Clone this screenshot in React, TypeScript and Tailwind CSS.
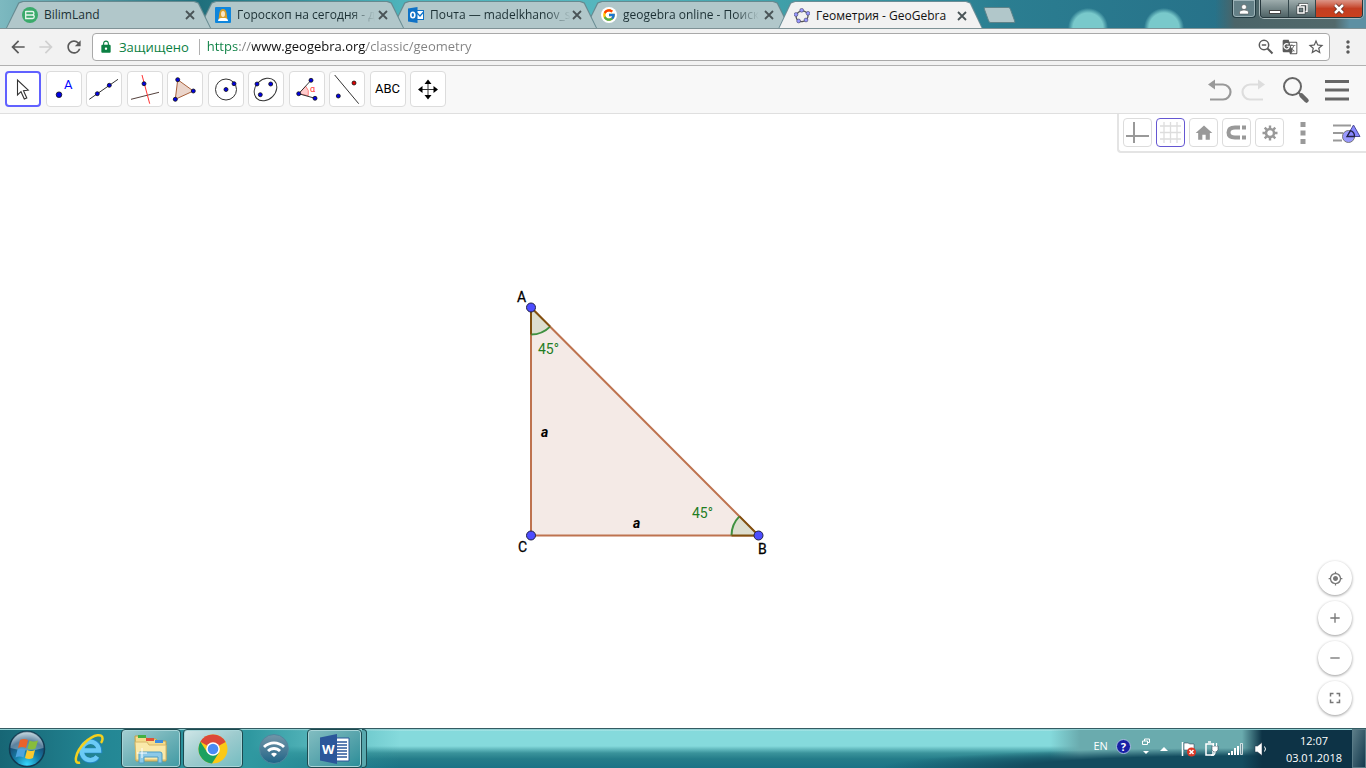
import { ReactNode } from 'react';
import clsx from 'clsx';
import {
  MdAdd,
  MdArrowBack,
  MdArrowForward,
  MdFullscreen,
  MdGTranslate,
  MdGpsFixed,
  MdHome,
  MdLock,
  MdMoreVert,
  MdRefresh,
  MdRemove,
  MdStarBorder,
  MdWifi,
} from 'react-icons/md';
import { FcGoogle } from 'react-icons/fc';

interface TabProps {
  title: string;
  icon: ReactNode;
  active?: boolean;
  layer: string;
}

interface ToolProps {
  label: string;
  selected?: boolean;
  children: ReactNode;
}

const BilimIcon = () => (
  <svg className="h-4 w-4 shrink-0" viewBox="0 0 16 16">
    <circle cx="8" cy="8" r="8" fill="#3aaa6b" />
    <path d="M3.700 4.500h6.500a1.750 1.750 0 0 1 0 3.500H3.700M10.500 8a1.750 1.750 0 0 1 0 3.500H3.700V8" fill="none" stroke="#e8f6ee" strokeWidth="1.300" />
    <path d="M3.700 4v4" stroke="#e8f6ee" strokeWidth="1.300" />
  </svg>
);

const HoroscopeIcon = () => (
  <svg className="h-4 w-4 shrink-0" viewBox="0 0 16 16">
    <rect width="16" height="16" rx="1" fill="#0f86dc" />
    <path d="M3.500 12C4.500 9 3.500 2 8 2s3.500 7 4.500 10z" fill="#d9a02c" />
    <ellipse cx="8" cy="7" rx="2" ry="3" fill="#fbe6c4" />
    <path d="M3 14c0-2.500 2-3 5-3s5 .5 5 3z" fill="#fff" />
  </svg>
);

const OutlookIcon = () => (
  <svg className="h-4 w-4 shrink-0" viewBox="0 0 16 16">
    <rect x="8" y="3.500" width="7.500" height="9" fill="#fff" stroke="#0f72c6" />
    <path d="M9 6l3 3 3.500-4" fill="none" stroke="#0f72c6" strokeWidth="1.200" />
    <path d="M0 1.500L9.500 0v16L0 14.500z" fill="#0f72c6" />
    <ellipse cx="4.800" cy="8" rx="2" ry="2.700" fill="none" stroke="#fff" strokeWidth="1.600" />
  </svg>
);

const GeoGebraIcon = () => (
  <svg className="h-4 w-4 shrink-0" viewBox="0 0 16 16">
    <ellipse cx="8" cy="8.300" rx="6" ry="5.300" fill="none" stroke="#555" strokeWidth="1.300" transform="rotate(-12 8 8)" />
    <g fill="#9999ff" stroke="#44446a" strokeWidth=".6">
      <circle cx="7.700" cy="2.300" r="1.900" />
      <circle cx="14" cy="5.300" r="1.900" />
      <circle cx="12" cy="12" r="1.900" />
      <circle cx="4.600" cy="13" r="1.900" />
      <circle cx="2" cy="6.500" r="1.900" />
    </g>
  </svg>
);

const Tab = ({ title, icon, active, layer }: TabProps) => (
  <div
    className={clsx(
      '-mr-3 w-[205px] shrink-0 px-px pt-px [clip-path:polygon(0_100%,6%_6%,8%_0,92%_0,94%_6%,100%_100%)]',
      active ? '-mb-px h-7 bg-[#6b8d96]' : 'h-[27px] bg-[#668a90]',
      layer,
    )}
  >
    <div
      className={clsx(
        'flex h-full items-center pl-[15px] pr-[14px] [clip-path:polygon(0_100%,6%_6%,8%_0,92%_0,94%_6%,100%_100%)]',
        active ? 'bg-[#f2f2f2]' : 'bg-[#b1c7ca]',
      )}
    >
      {icon}
      <button
        className={clsx(
          'ml-1.5 shrink-0 whitespace-nowrap text-left text-xs',
          active ? 'text-[#111111]' : 'text-[#1c3034]',
          !active && title.length > 12 && '[mask-image:linear-gradient(to_right,black_82%,transparent)]',
        )}
      >
        {title}
      </button>
      <button aria-label="Close tab" className="ml-auto">
        <svg width="12" height="12" viewBox="0 0 12 12">
          <path d="M2 2l8 8M10 2l-8 8" stroke="#4a5457" strokeWidth="1.800" />
        </svg>
      </button>
    </div>
  </div>
);

const WindowButtons = () => (
  <div className="ml-auto flex gap-1 self-start pr-[3px]">
    <button
      aria-label="Profile"
      className="grid h-[18px] w-6 place-items-center rounded-b border border-t-0 border-[#223b42] bg-[#648087] shadow-[inset_0_0_0_1px_#9db3b8]"
    >
      <svg width="10" height="12" viewBox="0 0 10 12" fill="#fff" stroke="#444" strokeWidth=".5">
        <circle cx="5" cy="4" r="2.500" />
        <path d="M.5 11V9Q1 7 5 7t4.500 2v2z" />
      </svg>
    </button>
    <div className="flex h-[18px] overflow-hidden rounded-b border border-t-0 border-[#26373c] shadow-[0_0_0_1px_#a9b8ba]">
      <button aria-label="Minimize" className="grid w-7 place-items-center border-r border-[#33464b] bg-linear-to-b from-[#9eadad] to-[#4f6366]">
        <svg width="12" height="12" viewBox="0 0 12 12">
          <rect x=".5" y="7.500" width="11" height="3" fill="#fff" stroke="#444" />
        </svg>
      </button>
      <button aria-label="Restore" className="grid w-[27px] place-items-center border-r border-[#33464b] bg-linear-to-b from-[#9eadad] to-[#4f6366]">
        <svg width="12" height="12" viewBox="0 0 12 12" fill="none">
          <path d="M4 3V1.500h7v7H9.500M2 4h6v6H2z" stroke="#3c4446" strokeWidth="3" />
          <path d="M4 3V1.500h7v7H9.500M2 4h6v6H2z" stroke="#fff" strokeWidth="1.500" />
        </svg>
      </button>
      <button aria-label="Close" className="grid w-[46px] place-items-center bg-linear-to-b from-[#dc9587] via-[#c33e22] to-[#c9401d]">
        <svg width="12" height="12" viewBox="0 0 12 12">
          <path d="M2 2l8 8M10 2l-8 8" stroke="#5a2a24" strokeWidth="4" />
          <path d="M2 2l8 8M10 2l-8 8" stroke="#fff" strokeWidth="2.500" />
        </svg>
      </button>
    </div>
  </div>
);

const TabStrip = () => (
  <header className="flex h-[29px] items-end overflow-hidden border-b border-[#7f9296] bg-[radial-gradient(ellipse_at_1081px_34px,#2b7e91_9px,transparent_14px),radial-gradient(circle_at_1088px_28px,#79c9cb_15px,transparent_20px),radial-gradient(ellipse_at_1157px_34px,#2b7e91_9px,transparent_14px),radial-gradient(circle_at_1164px_28px,#79c9cb_15px,transparent_20px),linear-gradient(to_right,transparent_1215px,#4b6468_1235px,#52696b_1335px,#5d90a3_1350px),linear-gradient(to_right,#7db9c0,#1f6f7c_200px,#4db3bb_400px,#55b6be_600px,#3f9ea8_790px,#2b7e91_1000px,#246a84)] pl-1.5">
    <Tab layer="z-40" title="BilimLand" icon={<BilimIcon />} />
    <Tab layer="z-30" title="Гороскоп на сегодня - д" icon={<HoroscopeIcon />} />
    <Tab layer="z-20" title="Почта — madelkhanov_s" icon={<OutlookIcon />} />
    <Tab
      layer="z-10"
      title="geogebra online - Поиск"
      icon={<span className="shrink-0 rounded-full bg-white p-px"><FcGoogle size={14} /></span>}
    />
    <Tab active layer="z-50" title="Геометрия - GeoGebra" icon={<GeoGebraIcon />} />
    <button
      aria-label="New tab"
      className="mb-[5px] ml-[15px] h-4 w-[27px] skew-x-20 rounded-xs border border-[#5d838a] bg-[#b1c7ca]"
    />
    <WindowButtons />
  </header>
);

const AddressBar = () => (
  <div className="flex h-[37px] items-center border-b border-[#b1b1b1] bg-[#f2f2f2] px-2 text-[#5a5a5a]">
    <button aria-label="Back" className="w-7">
      <MdArrowBack size={20} />
    </button>
    <button aria-label="Forward" className="w-7 text-[#d0d0d0]">
      <MdArrowForward size={20} />
    </button>
    <button aria-label="Reload" className="w-7">
      <MdRefresh size={20} />
    </button>
    <div className="flex h-7 flex-1 items-center rounded-sm border border-[#a9a9a9] bg-white pl-1.5 pr-1">
      <MdLock size={14} className="text-[#0b8043]" />
      <label htmlFor="url" className="ml-1.5 border-r border-[#b0b0b0] pr-2.5 text-[13px] leading-4 text-[#0b8043]">
        Защищено
      </label>
      <input
        id="url"
        readOnly
        value="https://www.geogebra.org/classic/geometry"
        className="ml-[7px] min-w-0 flex-1 bg-[linear-gradient(to_right,#0b8043_31px,#808080_31px,#808080_45px,#111111_45px,#111111_159px,#808080_159px)] bg-clip-text text-[13px] text-transparent outline-none"
      />
      <button aria-label="Zoom" className="w-[25px]">
        <svg width="18" height="18" viewBox="0 0 18 18" fill="none" stroke="currentColor" strokeWidth="1.500">
          <circle cx="7" cy="7" r="4.700" />
          <path d="M10.500 10.500l5 5" strokeWidth="2" />
          <path d="M4.800 7h4.400" />
        </svg>
      </button>
      <button aria-label="Translate" className="w-[25px]">
        <MdGTranslate size={16} />
      </button>
      <button aria-label="Bookmark" className="w-[18px]">
        <MdStarBorder size={18} />
      </button>
    </div>
    <button aria-label="Chrome menu" className="ml-2 w-5">
      <MdMoreVert size={20} />
    </button>
  </div>
);

const Tool = ({ label, selected, children }: ToolProps) => (
  <button
    aria-label={label}
    className={clsx(
      'grid h-9 w-9 place-items-center rounded bg-white',
      selected ? 'border-2 border-[#6161ff]' : 'border border-[#dcdcdc]',
    )}
  >
    <svg className="h-8 w-8" viewBox="2 2 32 32" fill="none" stroke="#333">
      {children}
    </svg>
  </button>
);

const Dot = ({ x, y, r = 2, fill = '#0000e6' }: { x: number; y: number; r?: number; fill?: string }) => (
  <circle cx={x} cy={y} r={r} fill={fill} stroke="#111" strokeWidth=".8" />
);

const Toolbar = () => (
  <nav className="flex h-12 items-center border-b border-[#dfdfdf] bg-[#f8f8f8] pl-[5px] pr-4">
    <div className="flex w-[441px] justify-between pb-0.5">
      <Tool label="Move" selected>
        <path d="M12.500 9v15l3.500-3.300 3.300 7.300 2.500-1.100-3.300-7.200 4.700-.5z" strokeWidth="1.100" />
      </Tool>
      <Tool label="Point">
        <Dot x={13} y={23.700} r={2.800} />
        <text x="18" y="18" fontSize="13" fontFamily="Roboto, sans-serif" fill="#0000ff" stroke="none">
          A
        </text>
      </Tool>
      <Tool label="Line">
        <path d="M3.300 28.300L32 8.300" />
        <Dot x={11.300} y={22.700} />
        <Dot x={23.300} y={14.300} />
      </Tool>
      <Tool label="Perpendicular line">
        <path d="M4 28.300l28-7" stroke="#54403c" />
        <path d="M15 4l7.700 28.700" stroke="#f33" />
        <Dot x={17} y={12.700} />
      </Tool>
      <Tool label="Polygon">
        <path d="M10.700 8.700L26.300 20 8.300 28.300z" fill="#ebd5cb" stroke="#a8603a" />
        <Dot x={10.700} y={8.700} />
        <Dot x={26.300} y={20} />
        <Dot x={8.300} y={28.300} />
      </Tool>
      <Tool label="Circle with center">
        <circle cx="18" cy="18.500" r="10.500" />
        <Dot x={18} y={18.500} />
        <Dot x={26} y={12.700} />
      </Tool>
      <Tool label="Ellipse">
        <ellipse cx="17.500" cy="18.500" rx="12.500" ry="10" transform="rotate(-45 17.500 18.500)" />
        <Dot x={9} y={13} />
        <Dot x={22.700} y={13} />
        <Dot x={12.300} y={23.700} />
      </Tool>
      <Tool label="Angle">
        <path d="M9.700 22.700l7-7.500a10 10 0 0 1 2.500 9.500z" fill="#fcc" stroke="#f55" strokeWidth=".7" />
        <path d="M22 9.300L9.700 22.700 26 27.300" />
        <Dot x={22} y={9.300} />
        <Dot x={9.700} y={22.700} />
        <Dot x={26} y={27.300} />
        <text x="21" y="21" fontSize="9" fontFamily="Roboto, sans-serif" fill="#f33" stroke="none">
          α
        </text>
      </Tool>
      <Tool label="Reflect about line">
        <path d="M5.700 4l24 28.700" />
        <Dot x={9.300} y={25} />
        <Dot x={25} y={12} fill="#e00000" />
      </Tool>
      <button className="h-9 w-9 rounded border border-[#dcdcdc] bg-white font-[Roboto,sans-serif] text-[13px] font-normal text-black">
        ABC
      </button>
      <Tool label="Move graphics view">
        <path d="M18 10v17M10 18.500h17" stroke="#333" />
        <path d="M18 8.500l3.500 4.500h-7zM18 28.500l3.500-4.500h-7zM8 18.500l4.500-3.500v7zM28 18.500l-4.500-3.500v7z" fill="#000" stroke="none" />
      </Tool>
    </div>
    <div className="ml-auto flex items-center text-[#666666]">
      <button aria-label="Undo">
        <svg width="26" height="26" viewBox="0 0 26 26" fill="none">
          <path d="M7 7.500h9a7 7 0 0 1 0 15H3" stroke="#999" strokeWidth="2.200" />
          <path d="M1 7.500L8 2.500v10z" fill="#999" />
        </svg>
      </button>
      <button aria-label="Redo" className="ml-[7px]">
        <svg width="26" height="26" viewBox="0 0 26 26" fill="none">
          <path d="M19 7.500h-9a7 7 0 0 0 0 15h13" stroke="#ddd" strokeWidth="2.200" />
          <path d="M25 7.500l-7-5v10z" fill="#ddd" />
        </svg>
      </button>
      <button aria-label="Search" className="ml-4">
        <svg width="28" height="28" viewBox="0 0 28 28" fill="none" stroke="#666">
          <circle cx="10.500" cy="10.500" r="8.500" strokeWidth="2" />
          <path d="M16.500 16.500l3 3" strokeWidth="2" />
          <path d="M19.500 19.500l5 5" strokeWidth="4.500" strokeLinecap="round" />
        </svg>
      </button>
      <button aria-label="Menu" className="ml-3.5">
        <svg width="26" height="26" viewBox="0 0 26 26" stroke="#666" strokeWidth="3">
          <path d="M1 4.500h24M1 13h24M1 22h24" />
        </svg>
      </button>
    </div>
  </nav>
);

const StyleButton = ({ label, selected, children }: ToolProps) => (
  <button
    aria-label={label}
    className={clsx(
      'grid h-[29px] w-[29px] place-items-center rounded border bg-white text-[#999999]',
      selected ? 'border-[#6557d2]' : 'border-[#dcdcdc]',
    )}
  >
    {children}
  </button>
);

const StyleBar = () => (
  <div className="absolute right-0 top-0 flex h-[39px] items-center gap-1 rounded-bl border-b-2 border-l-2 border-[#e4e4e4] bg-white pl-1 pr-[5px]">
    <StyleButton label="Axes">
      <svg width="23" height="23" viewBox="0 0 23 23" stroke="#999" strokeWidth="2">
        <path d="M8 1v21M0 15h23" />
      </svg>
    </StyleButton>
    <StyleButton label="Grid" selected>
      <svg width="23" height="23" viewBox="0 0 23 23" stroke="#ddd" strokeWidth="1.300">
        <path d="M5 1v21M11.500 1v21M18 1v21M1 5h21M1 11.500h21M1 18h21" />
      </svg>
    </StyleButton>
    <StyleButton label="Standard view">
      <MdHome size={20} />
    </StyleButton>
    <StyleButton label="Point capturing">
      <svg width="21" height="15" viewBox="0 0 21 15" fill="none" stroke="#999" strokeWidth="4">
        <path d="M14 2.500H9Q2.500 2.500 2.500 7.500T9 12.500h5M16 2.500h4M16 12.500h4" />
      </svg>
    </StyleButton>
    <StyleButton label="Settings">
      <svg width="16" height="16" viewBox="0 0 16 16" fill="none" stroke="#999">
        <circle cx="8" cy="8" r="4" strokeWidth="2.500" />
        <path d="M8 .5v3M8 12.500v3M.5 8h3M12.500 8h3M2.700 2.700l2 2M11.300 11.300l2 2M2.700 13.300l2-2M11.300 4.700l2-2" strokeWidth="2.400" />
      </svg>
    </StyleButton>
    <button aria-label="More" className="grid h-7 w-[29px] place-items-center">
      <svg width="6" height="22" viewBox="0 0 6 22" fill="#999">
        <path d="M.5 0h5v5h-5zM.5 8.500h5v5h-5zM.5 17h5v5h-5z" />
      </svg>
    </button>
    <button aria-label="Toggle style bar" className="ml-3">
      <svg width="28" height="22" viewBox="0 0 28 22">
        <path d="M0 3.500h18M0 11h10M0 18.500h9" stroke="#999" strokeWidth="2.200" />
        <circle cx="15.500" cy="14.500" r="6" fill="#99f" stroke="#777" />
        <path d="M20.500 3l6.500 11.500H14z" fill="#88f" stroke="#4a4a99" />
        <path d="M17.500 8.600a6 6 0 0 1 4 5.900H14z" fill="none" stroke="#224" strokeWidth="1.300" />
      </svg>
    </button>
  </div>
);

const Triangle = () => (
  <svg
    className="absolute left-[500px] top-[166px] font-[Roboto,sans-serif] text-sm"
    width="280"
    height="290"
    viewBox="0 0 280 290"
    fill="none"
  >
    <path d="M31 27.500V255.500H258.500z" fill="#f4eae6" stroke="#be734f" strokeWidth="2" />
    <path d="M31 27.500V54.500A27 27 0 0 0 50.100 46.600z" fill="#dddecf" />
    <path d="M31 54.500A27 27 0 0 0 50.100 46.600" stroke="#3f9140" strokeWidth="2" />
    <path d="M31 54.500V27.500l19.100 19.100" stroke="#80500f" strokeWidth="2" />
    <path d="M258.500 255.500h-27a27 27 0 0 1 7.900-19.100z" fill="#dddecf" />
    <path d="M231.500 255.500a27 27 0 0 1 7.900-19.100" stroke="#3f9140" strokeWidth="2" />
    <path d="M231.500 255.500h27l-19.100-19.100" stroke="#80500f" strokeWidth="2" />
    <g fill="#4d4dff" stroke="#222244">
      <circle cx="31" cy="27.500" r="4.500" />
      <circle cx="31" cy="255.500" r="4.500" />
      <circle cx="258.500" cy="255.500" r="4.500" />
    </g>
    <g fill="#000" stroke="#000" strokeWidth=".3">
      <text x="17" y="22">A</text>
      <text x="18" y="272">C</text>
      <text x="258" y="274">B</text>
    </g>
    <g fill="#1f7d1f">
      <text x="38" y="74">45°</text>
      <text x="192" y="238">45°</text>
    </g>
    <g fill="#000" className="font-bold italic">
      <text x="41" y="157">a</text>
      <text x="133" y="248">a</text>
    </g>
  </svg>
);

const zoomButtons = [
  { label: 'Standard view', icon: <MdGpsFixed size={15} /> },
  { label: 'Zoom in', icon: <MdAdd size={16} /> },
  { label: 'Zoom out', icon: <MdRemove size={16} /> },
  { label: 'Fullscreen', icon: <MdFullscreen size={18} /> },
];

const StartOrb = () => (
  <svg width="38" height="38" viewBox="0 0 38 38">
    <defs>
      <radialGradient id="orb" cx=".5" cy=".95" r=".9">
        <stop offset="0" stopColor="#35d8ff" />
        <stop offset=".4" stopColor="#167fa8" />
        <stop offset=".75" stopColor="#174b74" />
        <stop offset="1" stopColor="#9cb9c8" />
      </radialGradient>
    </defs>
    <circle cx="19" cy="19" r="17.500" fill="url(#orb)" stroke="#123b52" strokeWidth="1.500" />
    <path d="M2.500 18a16.500 16.500 0 0 1 33 0q-16 5-33 0z" fill="#fff" opacity=".3" />
    <path d="M12 10q4-2 8 0l-2 8q-4-2-8 0z" fill="#e9622a" />
    <path d="M21.500 10.500q4 2 8.500 0l-2.500 8q-4 2-8 0z" fill="#87bd3c" />
    <path d="M9.500 19.500q4-2 8 0l-2 8q-4-2-8 0z" fill="#4da4df" />
    <path d="M19 20q4 2 8 0l-2 8q-4 2-8 0z" fill="#fbc92f" />
  </svg>
);

const ExplorerLogo = () => (
  <svg width="30" height="32" viewBox="0 0 30 32" fill="none">
    <path d="M8 17.500h17.500A9 9.500 0 1 0 23.500 24" stroke="#2387c4" strokeWidth="5.500" />
    <path d="M8 17.500h17A8.700 9.200 0 1 0 23.300 23.500" stroke="#6bcbf6" strokeWidth="4.300" />
    <path d="M6 29.500C-1 32 1 19 11 9.500 20 1 29 0 28.500 6q0 2-1.500 4" stroke="#f4d01e" strokeWidth="2.500" />
  </svg>
);

const FolderIcon = () => (
  <svg width="34" height="30" viewBox="0 0 34 30">
    <path d="M1 2h10l2 3h9l2 2h8v20H2z" fill="#f5dc8c" stroke="#c2a04a" />
    <path d="M4 1h8v3H4z" fill="#42b142" />
    <path d="M12 4h8v3h-8z" fill="#e05138" />
    <path d="M21 6h8v3h-8z" fill="#3d8de0" />
    <path d="M1 8h12l2 3h17v15H2z" fill="#fae9aa" stroke="#d6b868" />
    <path d="M5 29V19q0-1 1-1h20q2 0 2 2v9h-4v-6H10v6z" fill="#8cc9e7" stroke="#4d9cc3" />
    <path d="M8 14v10M3 19h10" stroke="#fff" />
  </svg>
);

const ChromeIcon = () => (
  <svg width="30" height="30" viewBox="0 0 30 30">
    <circle cx="15" cy="15" r="14.500" fill="#fbc916" />
    <path d="M15 15L2.400 7.800A14.500 14.500 0 0 1 27.600 8z" fill="#dc4838" />
    <path d="M2.400 7.800A14.500 14.500 0 0 0 14 29.500l7-11L9 18z" fill="#1ba160" />
    <circle cx="15" cy="15" r="6.800" fill="#fff" />
    <circle cx="15" cy="15" r="5.300" fill="#4a8bf4" />
  </svg>
);

const WordIcon = () => (
  <svg width="32" height="30" viewBox="0 0 32 30">
    <path d="M15 4h15v23H15z" fill="#fff" stroke="#2b579a" />
    <path d="M18 8h10M18 11h10M18 14h10M18 17h10M18 20h10M18 23h10" stroke="#2b579a" strokeWidth="1.500" />
    <path d="M1 3.500L18 0v30L1 26.500z" fill="#2b579a" />
    <text x="3" y="20" fontSize="13" fontWeight="700" fontFamily="Open Sans, sans-serif" fill="#fff">
      W
    </text>
  </svg>
);

const taskButton = 'grid h-[39px] place-items-center rounded-sm border border-[#1c4a50] shadow-[inset_0_0_0_1px_#a8d5d8]';

const Taskbar = () => (
  <footer className="flex h-10 items-center border-t border-[#345c63] bg-[linear-gradient(to_right,transparent_1242px,#0d3346_1262px),linear-gradient(to_right,#176675,#238694_100px,#2f98a0_250px,transparent_400px),radial-gradient(ellipse_360px_20px_at_1240px_100%,#134c5f_60%,transparent),linear-gradient(to_right,transparent_1050px,#6aabae_1080px),linear-gradient(to_bottom,#b4e9e9_1px,#85dadc_2px,#85dadc_17px,#3a939b_24px,#247c89_30px,#1a7386)] font-['Open_Sans',sans-serif] text-[11px] text-white shadow-[inset_0_1px_0_#8fcfd2]">
    <button aria-label="Start" className="ml-2">
      <StartOrb />
    </button>
    <button aria-label="Internet Explorer" className="ml-7 mr-[17px]">
      <ExplorerLogo />
    </button>
    <button aria-label="Explorer" className={clsx(taskButton, 'w-[60px] bg-linear-to-br from-[#a4ced1] via-[#6fb2b8] to-[#3f9aa3]')}>
      <FolderIcon />
    </button>
    <button aria-label="Google Chrome" className={clsx(taskButton, 'ml-0.5 w-[60px] bg-linear-to-br from-[#d0e7e8] via-[#9dcbce] to-[#72bcc0]')}>
      <ChromeIcon />
    </button>
    <button aria-label="Wireless" className="mx-4 grid h-[30px] w-[30px] place-items-center rounded-full border border-[#50869e] bg-linear-to-b from-[#7295a7] to-[#1d6688]">
      <MdWifi size={24} />
    </button>
    <button aria-label="Word" className={clsx(taskButton, 'ml-0.5 w-[55px] bg-linear-to-br from-[#83bec2] to-[#278d98]')}>
      <WordIcon />
    </button>
    <div className="h-[39px] w-[5px] rounded-r-sm border border-l-0 border-[#1c4a50] bg-[#58a8ad]" />
    <div className="ml-auto flex h-full items-center">
      <span className="pb-1">EN</span>
      <span className="mb-1 ml-2 grid h-[15px] w-[15px] place-items-center rounded-full border border-[#a7bedf] bg-[#1720a5] font-bold leading-3">
        ?
      </span>
      <svg className="mb-1 ml-[11px]" width="8" height="18" viewBox="0 0 8 18" fill="none" stroke="#fff">
        <path d="M2.500 3V1h5v3.500h-2M.5 3h5v3.500h-5z" />
        <path d="M1 13h6l-3 3z" fill="#fff" stroke="none" />
      </svg>
      <svg className="ml-2.5" width="8" height="6" viewBox="0 0 8 6">
        <path d="M4 1l4 4H0z" fill="#fff" />
      </svg>
      <svg className="ml-3" width="17" height="16" viewBox="0 0 17 16">
        <path d="M2.500 1v14" stroke="#fff" strokeWidth="1.500" />
        <path d="M4 2h4l2 1h4v7H9L8 9H4z" fill="#fff" stroke="#234" strokeWidth=".5" />
        <circle cx="11.500" cy="11" r="4.500" fill="#db3826" />
        <path d="M9.500 9l4 4M13.500 9l-4 4" stroke="#fff" strokeWidth="1.500" />
      </svg>
      <svg className="ml-[7px]" width="16" height="16" viewBox="0 0 16 16" fill="none">
        <path d="M2 3h7v11H2zM4 1h3" stroke="#fff" strokeWidth="1.500" />
        <path d="M8 5h6v4l-2 2h-2L8 9z" fill="#fff" stroke="#234" strokeWidth=".5" />
        <path d="M9.500 2v3M12.500 2v3M11 11q0 4-4 3" stroke="#fff" strokeWidth="1.300" />
      </svg>
      <svg className="ml-2" width="16" height="14" viewBox="0 0 16 14" fill="#fff">
        <path d="M0 11h2v2H0zM3 9h2v4H3zM6 6h2v7H6zM9 4h2v9H9z" />
        <path d="M12.500 1.500h2v11h-2z" fill="#668b96" stroke="#fff" strokeWidth=".7" />
      </svg>
      <svg className="ml-2.5" width="14" height="16" viewBox="0 0 14 16">
        <path d="M1 5h2.500L8 1.500v13L3.500 11H1z" fill="#fff" stroke="#234" strokeWidth=".5" />
        <path d="M10.500 5.500q2 2.500 0 5" fill="none" stroke="#fff" />
      </svg>
      <time className="ml-[18px] mr-2.5 text-center leading-[17px]">
        12:07
        <br />
        03.01.2018
      </time>
      <button
        aria-label="Show desktop"
        className="h-[39px] w-3.5 border border-[#597b87] bg-linear-to-br from-[#5c7d88] to-[#123a4d]"
      />
    </div>
  </footer>
);

export default function App() {
  return (
    <div className="flex min-h-screen flex-col bg-white font-['Open_Sans',sans-serif]">
      <TabStrip />
      <AddressBar />
      <Toolbar />
      <main className="relative flex-1 overflow-hidden">
        <Triangle />
        <StyleBar />
        <div className="absolute bottom-[13px] right-3.5 flex flex-col gap-1.5">
          {zoomButtons.map((button) => (
            <button
              key={button.label}
              aria-label={button.label}
              className="grid h-[34px] w-[34px] place-items-center rounded-full bg-white text-[#777777] shadow-[0_1px_3px_rgba(0,0,0,0.4)]"
            >
              {button.icon}
            </button>
          ))}
        </div>
      </main>
      <Taskbar />
    </div>
  );
}
